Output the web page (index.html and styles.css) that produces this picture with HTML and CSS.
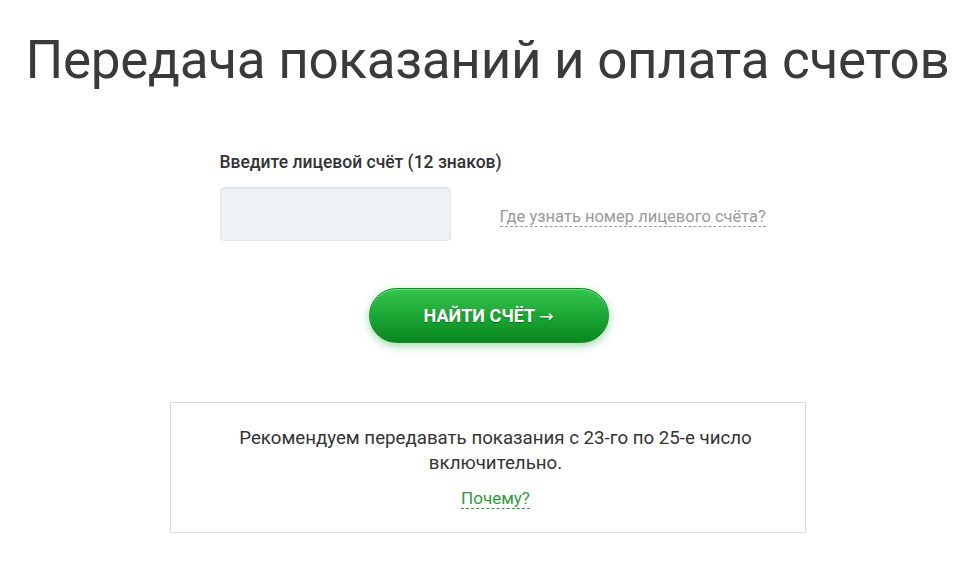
FILE: index.html
```html
<!DOCTYPE html>
<html lang="ru">
  <head>
    <meta charset="UTF-8" />
    <meta name="viewport" content="width=device-width, initial-scale=1.0" />
    <title>Передача показаний</title>
    <link rel="stylesheet" href="styles.css">
  </head>
  <body>
    <h1 class="page-title">Передача показаний и оплата счетов</h1>

    <form class="account-form">
      <label class="account-label" for="account">Введите лицевой счёт (12 знаков)</label>
      <div class="account-row">
        <input type="text" id="account" class="account-input" />
        <a href="#" class="hint-link">Где узнать номер лицевого счёта?</a>
      </div>
      <div class="button-row">
        <button type="submit" class="find-button">НАЙТИ СЧЁТ <span class="arrow">→</span></button>
      </div>
    </form>

    <div class="notice">
      <p>Рекомендуем передавать показания с 23-го по 25-е число<br />включительно.</p>
      <a href="#" class="why-link">Почему?</a>
    </div>
  </body>
</html>
```

FILE: styles.css
```css
body {
  margin: 0;
  background: #fff;
  font-family: Roboto, "Noto Sans", sans-serif;
  color: #333;
}

.page-title {
  margin: 25px 0 0;
  text-align: center;
  font-size: 53px;
  font-weight: 400;
  letter-spacing: -0.3px;
  line-height: 70px;
  color: #3a3a3a;
}

.account-form {
  width: 560px;
  margin: 56px auto 0;
  padding-left: 12px;
  box-sizing: border-box;
}

.account-label {
  display: block;
  font-size: 17.5px;
  font-weight: 500;
  color: #333;
  line-height: 22px;
}

.account-row {
  display: flex;
  align-items: center;
  gap: 49px;
  margin-top: 14px;
}

.account-input {
  width: 231px;
  height: 54px;
  box-sizing: border-box;
  background: #eef2f4;
  border: 1px solid #e1e6e8;
  border-radius: 4px;
  box-shadow: inset 0 1px 2px rgba(0, 0, 0, 0.06);
}

.hint-link {
  margin-top: 6px;
  font-size: 16.5px;
  color: #9a9a9a;
  white-space: nowrap;
  text-decoration: none;
  border-bottom: 1px dashed #9a9a9a;
  line-height: 19px;
}

.button-row {
  display: flex;
  justify-content: center;
  margin: 47px 0 0 -10px;
}

.find-button {
  width: 240px;
  height: 55px;
  border: 1px solid #0d8a22;
  border-radius: 28px;
  background: linear-gradient(#35c44e 0%, #1ca735 50%, #0a871f 100%);
  box-shadow: 0 3px 8px rgba(40, 170, 60, 0.45), inset 0 1px 0 rgba(255, 255, 255, 0.35);
  color: #fff;
  font-family: Roboto, sans-serif;
  font-size: 18px;
  font-weight: 700;
  text-shadow: 0 1px 1px rgba(0, 60, 10, 0.5);
  cursor: pointer;
}

.arrow {
  font-family: "DejaVu Sans", sans-serif;
  font-weight: 400;
  font-size: 17px;
}

.notice {
  width: 636px;
  box-sizing: border-box;
  margin: 59px auto 0;
  padding: 23px 20px 23px 36px;
  border: 1px solid #dcdcdc;
  text-align: center;
}

.notice p {
  margin: 0;
  font-size: 18.7px;
  line-height: 25px;
  color: #333;
}

.why-link {
  display: inline-block;
  margin-top: 12px;
  font-size: 17px;
  line-height: 20px;
  color: #2b9a3c;
  text-decoration: none;
  border-bottom: 1px dashed #2b9a3c;
}
```
